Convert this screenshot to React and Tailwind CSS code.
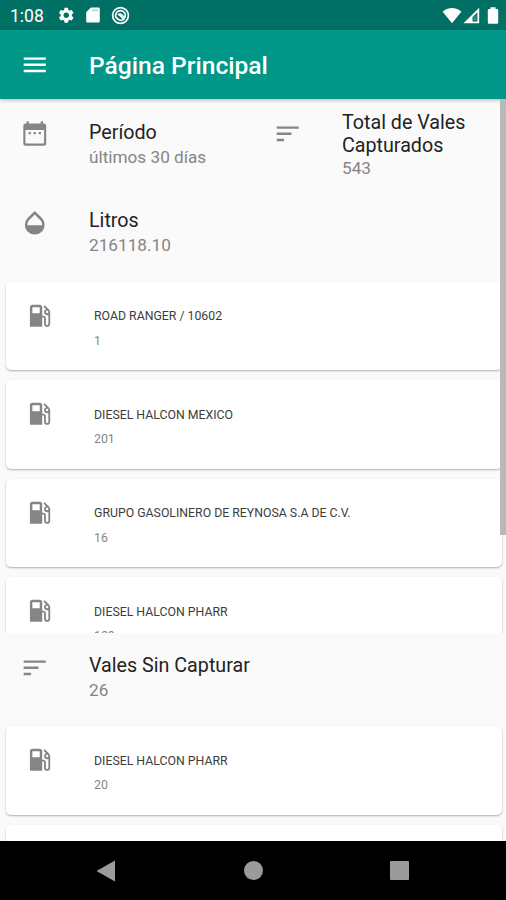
import { MdLocalGasStation, MdMenu, MdOpacity, MdSettings, MdSort } from "react-icons/md";

function CalendarIcon({ className }) {
  return (
    <svg className={className} viewBox="0 0 29.5 29.5">
      <path
        fill="currentColor"
        fillRule="evenodd"
        d="M6.500 2.200h2.200v2.300h12.100V2.200h2.200v2.300h.7a2.500 2.500 0 0 1 2.500 2.500V24.200a2.500 2.500 0 0 1-2.500 2.500H5.800a2.500 2.500 0 0 1-2.500-2.500V7a2.500 2.500 0 0 1 2.500-2.500h.7zM5.400 10.900V23.600a1 1 0 0 0 1 1H23.100a1 1 0 0 0 1-1V10.900z"
      />
      <path fill="currentColor" d="M8.600 13.100h2.200v2.200H8.600zM13.600 13.100h2.200v2.200h-2.200zM18.700 13.100h2.200v2.200h-2.200z" />
    </svg>
  );
}

function StatusBar() {
  return (
    <div className="flex h-[30px] shrink-0 items-center bg-[#006f64] pr-[7px] pl-[10px] text-white">
      <span className="w-[47px] pt-[3px] text-[17.5px] leading-none">1:08</span>
      <MdSettings className="size-[18.5px]" />
      <svg className="ml-[10px] h-[16px] w-[14px]" viewBox="0 0 14 16">
        <path fill="currentColor" d="M5 .5h7.5A1.3 1.3 0 0 1 13.800 1.800V14.200A1.300 1.300 0 0 1 12.500 15.500H1.500A1.300 1.300 0 0 1 .2 14.200V5z" />
        <path stroke="#00796b" strokeWidth="1.100" d="M6 3.200h6" opacity=".45" />
      </svg>
      <svg className="ml-[11px] size-[19px]" viewBox="0 0 19 19" fill="none" stroke="currentColor">
        <circle cx="9.500" cy="9.500" r="7.900" strokeWidth="1.700" />
        <path strokeWidth="1.700" d="M5.300 12A4.900 4.900 0 1 1 13.800 11.800M5.500 11.500c1.800 3.500 5.500 3.300 7.400 1.600L8 8.300" />
        <path strokeWidth="1.500" d="M7 9c1.200-1.500 2.800-1.500 4 0l3 3" />
      </svg>
      <svg className="ml-auto h-[17px] w-[20px]" viewBox="0 0 20 17">
        <path fill="currentColor" d="M.7 4.700C5.800-.1 14.200-.1 19.300 4.700L10 16.200z" />
      </svg>
      <svg className="ml-px h-[17px] w-[17px]" viewBox="0 0 17 17">
        <path fill="currentColor" fillRule="evenodd" d="M16.200.7v15.500H.5zM14.400 5.200L9.500 10v4.500h4.900z" />
        <path fill="currentColor" d="M10.500 13.500V10l3-3v6.500z" opacity=".2" />
      </svg>
      <svg className="ml-[7px] h-[17px] w-[12px]" viewBox="0 0 12 17">
        <path fill="currentColor" d="M3.500.3h5v1.600H10A1.200 1.200 0 0 1 11.200 3.100V15.500A1.200 1.200 0 0 1 10 16.700H2A1.200 1.200 0 0 1 .8 15.500V3.100A1.200 1.200 0 0 1 2 1.900h1.500z" />
      </svg>
    </div>
  );
}

function Stat({ icon: Icon, title, value, tight }) {
  return (
    <div className="flex flex-1 pl-[20px]">
      <Icon className="mt-[20px] size-[29.5px] shrink-0 text-[#858585]" />
      <div className={tight ? "ml-[39.5px] pt-[11.500px]" : "ml-[39.5px] pt-[21.500px]"}>
        <div className="text-[19.700px] leading-[23.500px] text-[#232323]">{title}</div>
        <div className={tight ? "text-[17.200px] leading-[21px] text-[#858585]" : "mt-[2.500px] text-[17.200px] leading-[21px] text-[#858585]"}>{value}</div>
      </div>
    </div>
  );
}

function StationCard({ name, count }) {
  return (
    <div className="flex h-[88.500px] shrink-0 rounded-[5px] bg-white pl-[19.500px] shadow-[0_1px_2px_rgba(0,0,0,0.3)]">
      {name && (
        <>
          <MdLocalGasStation className="mt-[19px] size-[29.5px] shrink-0 text-[#858585]" />
          <div className="ml-[39.5px] pt-[26.500px]">
            <div className="text-[12.300px] leading-[16px] text-[#3c3c3c]">{name}</div>
            <div className="mt-[8.500px] text-[12.300px] leading-[16px] text-[#858585]">{count}</div>
          </div>
        </>
      )}
    </div>
  );
}

const captured = [
  ["ROAD RANGER / 10602", "1"],
  ["DIESEL HALCON MEXICO", "201"],
  ["GRUPO GASOLINERO DE REYNOSA S.A DE C.V.", "16"],
  ["DIESEL HALCON PHARR", "123"],
];

export default function App() {
  return (
    <div className="relative flex h-[900px] w-[506px] flex-col overflow-hidden bg-[#fafafa] font-[Roboto,sans-serif]">
      <StatusBar />
      <header className="z-10 flex h-[69px] shrink-0 items-center bg-[#009688] pl-[20px] text-white shadow-[0_1px_4px_rgba(0,0,0,0.3)]">
        <MdMenu className="size-[29.5px]" />
        <h1 className="ml-[39.5px] pt-[3px] text-[24.600px] leading-none font-medium">Página Principal</h1>
      </header>
      <main className="flex h-[742px] shrink-0 flex-col overflow-hidden">
        <div className="flex h-[88.500px] shrink-0">
          <Stat icon={CalendarIcon} title="Período" value="últimos 30 días" />
          <Stat icon={MdSort} title={<>Total de Vales<br />Capturados</>} value="543" tight />
        </div>
        <div className="flex h-[88.500px] shrink-0">
          <Stat icon={MdOpacity} title="Litros" value="216118.10" />
        </div>
        <div className="flex h-[356.500px] shrink-0 flex-col gap-[10px] overflow-hidden pt-[5.500px] pr-[4px] pl-[5.500px]">
          {captured.map(([name, count]) => <StationCard key={name} name={name} count={count} />)}
        </div>
        <div className="flex h-[88px] shrink-0">
          <Stat icon={MdSort} title="Vales Sin Capturar" value="26" />
        </div>
        <div className="flex h-[120.500px] shrink-0 flex-col gap-[10px] overflow-hidden pt-[5.500px] pr-[4px] pl-[5.500px]">
          <StationCard name="DIESEL HALCON PHARR" count="20" />
          <StationCard />
        </div>
      </main>
      <div className="absolute top-[99px] right-0 z-20 h-[436px] w-[6px] bg-[#b9b9b9]" />
      <nav className="z-10 flex h-[59px] shrink-0 items-center bg-black pl-[96px] text-[#9b9b9b]">
        <svg className="h-[22px] w-[19px]" viewBox="0 0 19 22" fill="currentColor"><path d="M19 .5v21L.5 11z" /></svg>
        <div className="ml-[129px] size-[18.500px] rounded-full bg-[#9b9b9b]" />
        <div className="ml-[127px] size-[19px] rounded-[1px] bg-[#9b9b9b]" />
      </nav>
    </div>
  );
}
